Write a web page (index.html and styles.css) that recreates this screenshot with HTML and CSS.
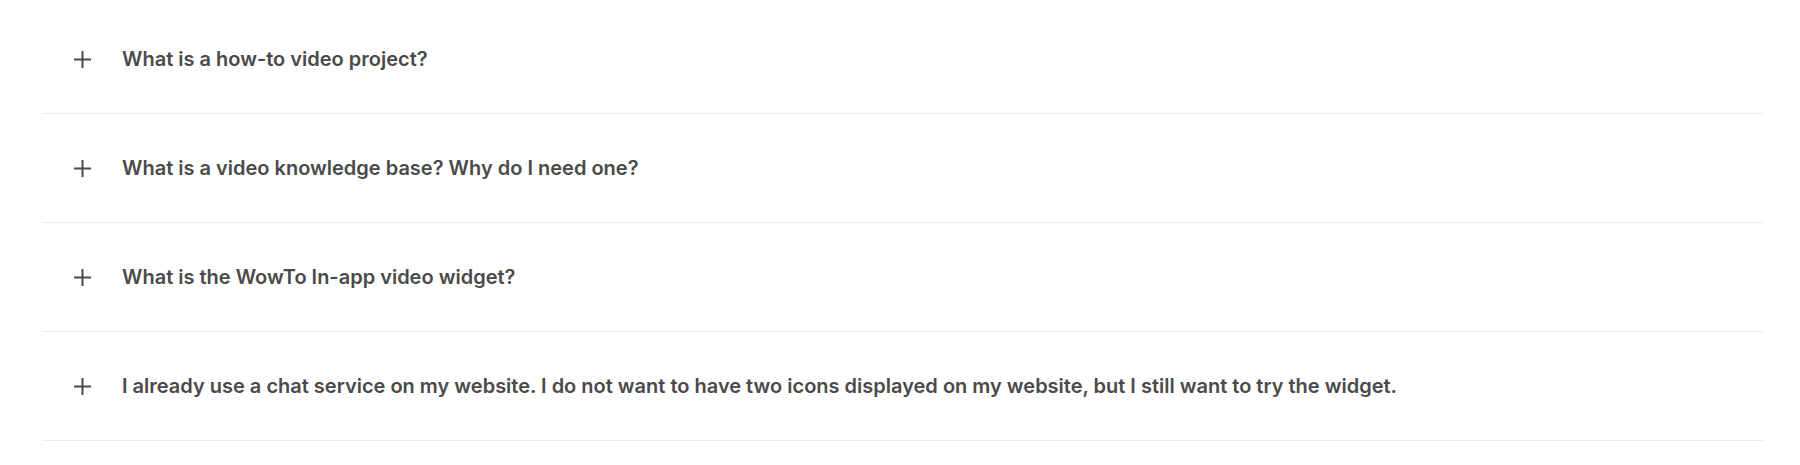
FILE: index.html
```html
<html lang="en">

<head>
    <meta charset="UTF-8">
    <meta name="viewport" content="width=device-width, initial-scale=1.0">
    <title>FAQ</title>
    <link rel="stylesheet" href="styles.css">
</head>

<body>
    <main class="faq">
        <div class="faq-item">
            <svg class="plus" width="19" height="19" viewBox="0 0 19 19"><path d="M9.5 1v17M1 9.5h17" stroke="#4a4a4a" stroke-width="2" fill="none"/></svg>
            <span class="question">What is a how-to video project?</span>
        </div>
        <div class="faq-item">
            <svg class="plus" width="19" height="19" viewBox="0 0 19 19"><path d="M9.5 1v17M1 9.5h17" stroke="#4a4a4a" stroke-width="2" fill="none"/></svg>
            <span class="question">What is a video knowledge base? Why do I need one?</span>
        </div>
        <div class="faq-item">
            <svg class="plus" width="19" height="19" viewBox="0 0 19 19"><path d="M9.5 1v17M1 9.5h17" stroke="#4a4a4a" stroke-width="2" fill="none"/></svg>
            <span class="question">What is the WowTo In-app video widget?</span>
        </div>
        <div class="faq-item">
            <svg class="plus" width="19" height="19" viewBox="0 0 19 19"><path d="M9.5 1v17M1 9.5h17" stroke="#4a4a4a" stroke-width="2" fill="none"/></svg>
            <span class="question">I already use a chat service on my website. I do not want to have two icons displayed on my website, but I still want to try the widget.</span>
        </div>
    </main>
</body>

</html>
```

FILE: styles.css
```css
body {
    font-family: Inter, 'Liberation Sans', sans-serif;
    background-color: #fff;
    margin: 0;
    padding-top: 5px;
}

.faq {
    margin: 0 37px 0 42px;
}

.faq-item {
    display: flex;
    align-items: center;
    height: 108px;
    padding-left: 31px;
    border-bottom: 1px solid #ebebeb;
}

.plus {
    flex-shrink: 0;
    margin-right: 30px;
}

.question {
    font-size: 20px;
    font-weight: 600;
    color: #4a4a4a;
}
```
